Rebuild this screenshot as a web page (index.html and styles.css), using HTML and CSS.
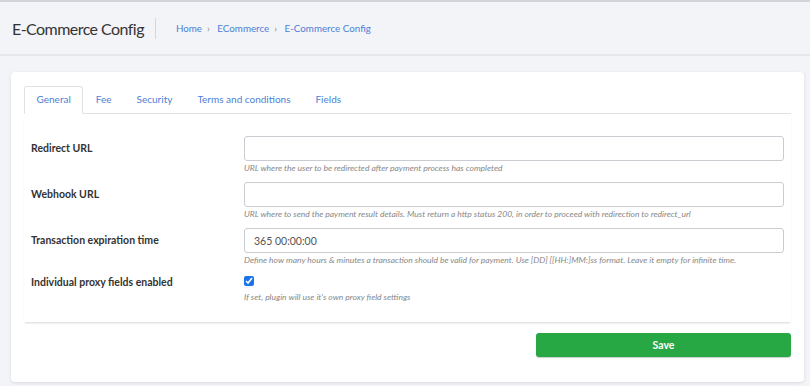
FILE: index.html
```html
<!DOCTYPE HTML><html>
<head>
  <title>E-Commerce Config</title>
  <meta name="viewport" content="width=device-width, initial-scale=1">
  <link rel="stylesheet" href="styles.css">
</head>
<body>
  <div class="topbar"></div>
  <div class="header">
    <h1>E-Commerce Config</h1>
    <div class="crumbs">
      <a href="#">Home</a><span class="sep">›</span>
      <a href="#">ECommerce</a><span class="sep">›</span>
      <a href="#">E-Commerce Config</a>
    </div>
  </div>
  <div class="card">
    <ul class="tabs">
      <li class="tab active">General</li>
      <li class="tab">Fee</li>
      <li class="tab">Security</li>
      <li class="tab">Terms and conditions</li>
      <li class="tab">Fields</li>
    </ul>
    <div class="panel">
      <div class="row">
        <label class="label">Redirect URL</label>
        <div class="field">
          <input class="input" type="text">
          <p class="help">URL where the user to be redirected after payment process has completed</p>
        </div>
      </div>
      <div class="row">
        <label class="label">Webhook URL</label>
        <div class="field">
          <input class="input" type="text">
          <p class="help">URL where to send the payment result details. Must return a http status 200, in order to proceed with redirection to redirect_url</p>
        </div>
      </div>
      <div class="row">
        <label class="label">Transaction expiration time</label>
        <div class="field">
          <input class="input" type="text" value="365 00:00:00">
          <p class="help">Define how many hours &amp; minutes a transaction should be valid for payment. Use [DD] [[HH:]MM:]ss format. Leave it empty for infinite time.</p>
        </div>
      </div>
      <div class="row">
        <label class="label label-check">Individual proxy fields enabled</label>
        <div class="field">
          <input class="check" type="checkbox" checked>
          <p class="help help-check">If set, plugin will use it's own proxy field settings</p>
        </div>
      </div>
    </div>
    <div class="actions">
      <button class="button">Save</button>
    </div>
  </div>
</body>
</html>
```

FILE: styles.css
```css
html {
  font-family: Lato, "Open Sans", sans-serif;
}
body {
  margin: 0;
  background-color: #f3f4f8;
  color: #333;
}
.topbar {
  height: 2px;
  background-color: #d2d4d9;
}
.header {
  display: flex;
  align-items: center;
  height: 52px;
  padding-left: 12px;
  border-bottom: 2px solid #e6e7eb;
}
h1 {
  margin: 0;
  font-size: 16px;
  letter-spacing: -0.55px;
  font-weight: normal;
  color: #333;
  padding-right: 11px;
  border-right: 1px solid #d4d6da;
  line-height: 21px;
}
.crumbs {
  font-size: 9.8px;
  padding-left: 20px;
}
.crumbs a {
  color: #4d7fd6;
  text-decoration: none;
}
.sep {
  color: #888;
  padding: 0 5px;
}
.card {
  margin: 16px 6px 4px 11px;
  background-color: #fff;
  border-radius: 4px;
  box-shadow: 0 1px 3px rgba(140,140,150,.25);
  padding: 14px 13px 25px 13px;
}
.tabs {
  display: flex;
  list-style: none;
  margin: 0;
  padding: 0;
  border-bottom: 1px solid #dee2e6;
}
.tab {
  font-size: 10px;
  line-height: 13px;
  color: #4d7fd6;
  padding: 6px 11.5px 7px 11.5px;
  margin-bottom: -1px;
  border: 1px solid transparent;
  border-radius: 3px 3px 0 0;
}
.tab.active {
  border-color: #dee2e6 #dee2e6 #fff #dee2e6;
}
.panel {
  padding: 22px 7px 11px 7px;
  box-shadow: 0 2px 2px -1px rgba(140,140,150,.35);
}
.row {
  display: flex;
}
.label {
  width: 213px;
  font-size: 10.5px;
  line-height: 13px;
  font-weight: bold;
  padding-top: 6px;
}
.label-check {
  padding-top: 2px;
}
.field {
  flex: 1;
}
.input {
  display: block;
  box-sizing: border-box;
  width: 100%;
  height: 25px;
  border: 1px solid #c9cdd2;
  border-radius: 3px;
  padding: 0 9px;
  font-family: Lato, sans-serif;
  font-size: 10.5px;
  color: #555;
}
.check {
  display: block;
  margin: 2px 0 0 0;
  width: 10px;
  height: 10px;
  accent-color: #1a73e8;
}
.help {
  margin: 2px 0 9px 0;
  font-size: 8.5px;
  line-height: 10px;
  font-style: italic;
  color: #888;
}
.help-check {
  margin-top: 6px;
}
.actions {
  display: flex;
  justify-content: flex-end;
  padding-top: 11px;
}
.button {
  width: 255px;
  height: 24px;
  font-family: Lato, sans-serif;
  font-size: 10.5px;
  font-weight: bold;
  color: #fff;
  background-color: #28a745;
  border: none;
  border-radius: 3px;
  box-shadow: 0 1px 1px rgba(0,0,0,.2);
}
```
